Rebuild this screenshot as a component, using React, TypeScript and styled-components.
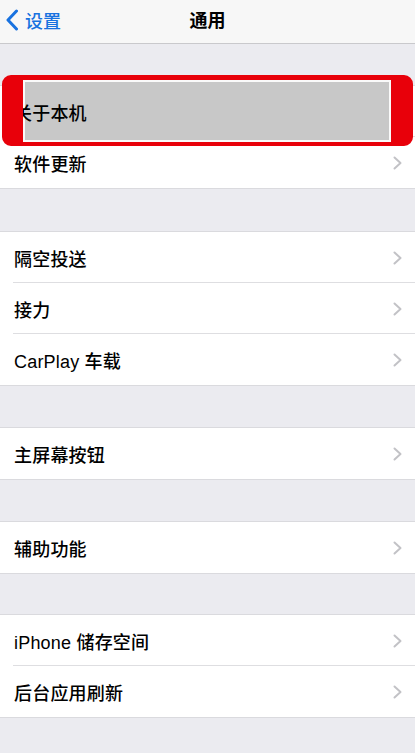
import React from "react";
import styled, { createGlobalStyle } from "styled-components";

const Global = createGlobalStyle`
  html, body { margin: 0; padding: 0; }
  body {
    background: #ebebf0;
    font-family: "Liberation Sans", "Noto Sans CJK SC", sans-serif;
    -webkit-font-smoothing: antialiased;
  }
`;

const Page = styled.div`
  width: 415px;
  min-height: 753px;
  background: #ebebf0;
  overflow: hidden;
`;

const NavBar = styled.header`
  height: 43px;
  background: #f7f7f7;
  border-bottom: 1px solid #c9c9cc;
  display: grid;
  grid-template-columns: 1fr auto 1fr;
  align-items: center;
`;

const Back = styled.div`
  display: flex;
  align-items: center;
  gap: 6px;
  padding-left: 5px;
  color: #1872e0;
  font-size: 18px;
  font-weight: 500;
  margin-top: -4px;
`;

const Title = styled.div`
  font-size: 18px;
  font-weight: 700;
  color: #000;
  margin-top: -6px;
`;

const Section = styled.section<{ $gap: number }>`
  margin-top: ${(p) => p.$gap}px;
  background: #fff;
  box-shadow: 0 -1px 0 #dadade, 0 1px 0 #dadade;
`;

const Row = styled.div<{ $last?: boolean; $h: number }>`
  position: relative;
  height: ${(p) => p.$h}px;
  display: flex;
  align-items: center;
  padding-left: 14px;
  &::after {
    content: "";
    display: ${(p) => (p.$last ? "none" : "block")};
    position: absolute;
    left: 13px;
    right: 0;
    bottom: 0;
    height: 1px;
    background: #dedee1;
  }
`;

const Label = styled.span`
  flex: 1;
  position: relative;
  z-index: 2;
  font-size: 18px;
  font-weight: 500;
  color: #000;
  letter-spacing: 0.2px;
  margin-top: 1px;
`;

const Chevron = styled.svg`
  width: 9px;
  height: 14px;
  margin-right: 13px;
  flex: none;
`;

const PressedBox = styled.div`
  position: absolute;
  left: 23px;
  right: 24px;
  top: -6px;
  bottom: -5px;
  background: #c8c8c8;
  border: 2px solid #fafafa;
  z-index: 1;
`;

const RedFrame = styled.div`
  position: absolute;
  left: 2px;
  right: 2px;
  top: -11px;
  bottom: -9px;
  border-style: solid;
  border-color: #e8000a;
  border-width: 5px 22px 4px 21px;
  border-radius: 9px;
  z-index: 3;
  pointer-events: none;
`;

const ChevronIcon = () => (
  <Chevron viewBox="0 0 9 14">
    <path d="M1.5 1.5 L7.5 7 L1.5 12.5" fill="none" stroke="#c2c2c6" strokeWidth="2" strokeLinecap="round" strokeLinejoin="round" />
  </Chevron>
);

const groups: { gap: number; h: number; items: string[] }[] = [
  { gap: 42, h: 51, items: ["关于本机", "软件更新"] },
  { gap: 44, h: 51, items: ["隔空投送", "接力", "CarPlay 车载"] },
  { gap: 43, h: 51, items: ["主屏幕按钮"] },
  { gap: 43, h: 51, items: ["辅助功能"] },
  { gap: 42, h: 51, items: ["iPhone 储存空间", "后台应用刷新"] },
];

export default function App() {
  return (
    <Page>
      <Global />
      <NavBar>
        <Back>
          <svg width="14" height="22" viewBox="0 0 14 22">
            <path d="M11.5 2 L3 11 L11.5 20" fill="none" stroke="#1872e0" strokeWidth="3" strokeLinecap="round" strokeLinejoin="round" />
          </svg>
          <span>设置</span>
        </Back>
        <Title>通用</Title>
        <div />
      </NavBar>
      {groups.map((g, gi) => (
        <Section key={gi} $gap={g.gap}>
          {g.items.map((it, i) => {
            const highlighted = gi === 0 && i === 0;
            return (
              <Row key={it} $h={g.h} $last={i === g.items.length - 1}>
                {highlighted && <PressedBox />}
                <Label>{it}</Label>
                {!highlighted && <ChevronIcon />}
                {highlighted && <RedFrame />}
              </Row>
            );
          })}
        </Section>
      ))}
    </Page>
  );
}
